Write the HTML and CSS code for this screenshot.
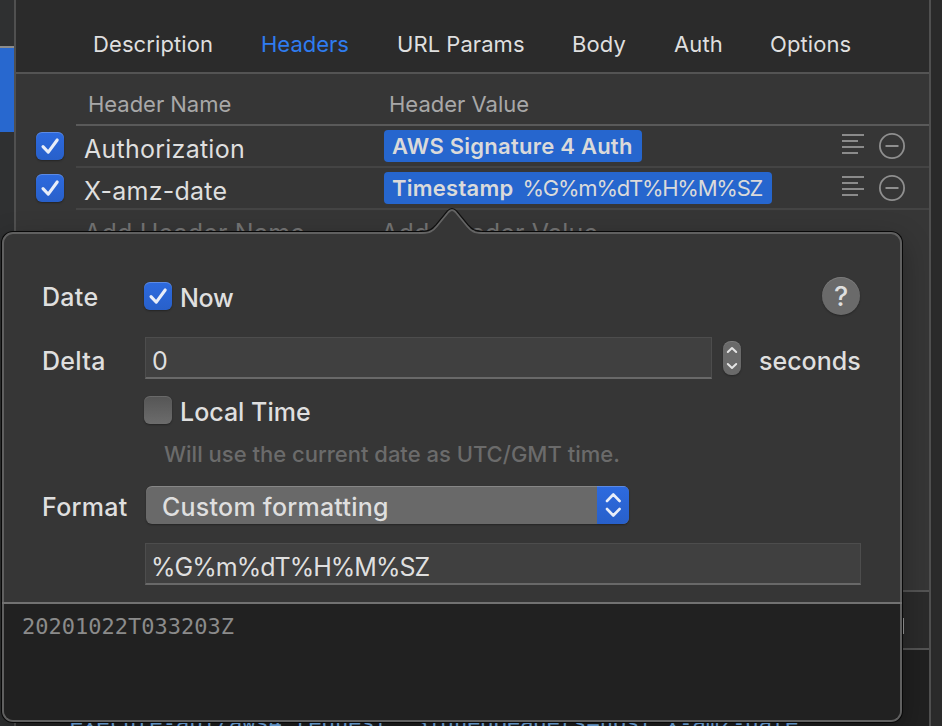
FILE: index.html
```html
<!DOCTYPE html>
<html lang="en">
<head>
<meta charset="utf-8">
<title>Request editor</title>
<link rel="stylesheet" href="styles.css">
</head>
<body>
<svg class="defs" width="0" height="0" aria-hidden="true">
  <symbol id="check" viewBox="0 0 28 28"><path d="M7 14.6 L12.3 20.2 L21.2 8" fill="none" stroke="#e8edf8" stroke-width="3.1" stroke-linecap="round" stroke-linejoin="round"/></symbol>
  <symbol id="lines" viewBox="0 0 22 20"><path d="M0 1H22M0 7H16M0 13H22M0 19H16" stroke="#8b8b8b" stroke-width="2"/></symbol>
  <symbol id="minus" viewBox="0 0 26 26"><circle cx="13" cy="13" r="12.1" fill="none" stroke="#8f8f8f" stroke-width="1.8"/><path d="M6.5 13H19.5" stroke="#8f8f8f" stroke-width="2"/></symbol>
</svg>
<div class="window">
  <aside class="sidebar"><div class="selected"></div></aside>
  <main class="editor">
    <nav class="tabs">
      <span class="tab t1">Description</span><span class="tab t2 active">Headers</span><span class="tab t3">URL Params</span><span class="tab t4">Body</span><span class="tab t5">Auth</span><span class="tab t6">Options</span>
    </nav>
    <section class="headers">
      <div class="thead"><span class="hname">Header Name</span><span class="hvalue">Header Value</span></div>
      <div class="row">
        <span class="checkbox on"><svg><use href="#check"/></svg></span>
        <div class="cells"><span class="name n1">Authorization</span><span class="token k1"><b>AWS Signature 4 Auth</b></span>
          <svg class="lines"><use href="#lines"/></svg><svg class="minus"><use href="#minus"/></svg></div>
      </div>
      <div class="row">
        <span class="checkbox on"><svg><use href="#check"/></svg></span>
        <div class="cells"><span class="name n2">X-amz-date</span><span class="token k2"><b>Timestamp</b><span class="fmt">%G%m%dT%H%M%SZ</span></span>
          <svg class="lines"><use href="#lines"/></svg><svg class="minus"><use href="#minus"/></svg></div>
      </div>
      <div class="row empty"><span class="add-name">Add Header Name</span><span class="add-value">Add Header Value</span></div>
    </section>
    <div class="response-bar"><i></i></div>
    <pre class="code">execute-api/aws4_request, SignedHeaders=host;x-amz-date</pre>
  </main>
  <aside class="inspector"></aside>
</div>

<div class="popover">
  <svg class="arrow" viewBox="0 0 66 29"><path class="fill" d="M0 28 L4 26.5 C11 26 14 24 18 19 L29.5 5 Q33 1.5 36.5 5 L48 19 C52 24 55 26 62 26.5 L66 28 V29 H0Z"/><path class="outer" d="M3 24.5 C10 24.3 13 22.5 17 18 L28.5 4 Q33 -0.8 37.5 4 L49 18 C53 22.5 56 24.3 63 24.5"/><path class="inner" d="M0 26 H2 C11 26 14 24 18 19 L29.5 5 Q33 1.4 36.5 5 L48 19 C52 24 55 26 64 26 H66"/></svg>
  <div class="form">
    <div class="line date"><label class="lab date-lab">Date</label><span class="checkbox on"><svg><use href="#check"/></svg></span><span class="opt now">Now</span><span class="help"><span>?</span></span></div>
    <div class="line delta"><label class="lab delta-lab">Delta</label><span class="field">0</span>
      <svg class="stepper" viewBox="0 0 18 34"><path d="M4.8 11 L9 7 L13.2 11M4.8 23 L9 27 L13.2 23" fill="none" stroke="#e4e4e4" stroke-width="2" stroke-linecap="round" stroke-linejoin="round"/></svg>
      <span class="opt sec">seconds</span></div>
    <div class="line local"><span class="checkbox"></span><span class="opt loc">Local Time</span></div>
    <div class="hint"><span>Will use the current date as UTC/GMT time.</span></div>
    <div class="line format"><label class="lab format-lab">Format</label><span class="select"><span class="custom">Custom formatting</span><svg viewBox="0 0 32 38"><path d="M10 15 L16.3 8.5 L22.6 15M10 23 L16.3 29.5 L22.6 23" fill="none" stroke="#e8edf8" stroke-width="2.6" stroke-linecap="round" stroke-linejoin="round"/></svg></span></div>
    <div class="field pattern"><span>%G%m%dT%H%M%SZ</span></div>
  </div>
  <div class="preview">20201022T033203Z</div>
</div>
</body>
</html>
```
FILE: styles.css
```css
* { box-sizing: border-box; }
body {
  margin: 0;
  width: 942px;
  height: 726px;
  overflow: hidden;
  position: relative;
  background: #292929;
  color: #dfdfdf;
  font-family: Inter, "Liberation Sans", sans-serif;
  font-size: 22px;
  white-space: nowrap;
}
.defs { position: absolute; }
svg { display: block; flex: none; }
.window { display: flex; height: 726px; overflow: hidden; }
.sidebar { width: 14px; flex: none; background: #2f3031; padding-top: 46px; }
.selected { height: 86px; border-top: 2px solid #8c8c8c; background: #2868cf; }
.editor {
  width: 917px;
  flex: none;
  display: flex;
  flex-direction: column;
  border: solid #505050;
  border-width: 0 2px;
  background: #363636;
}
.inspector { flex: 1; background: #2a2a2a; }

.tabs {
  height: 74px;
  flex: none;
  display: flex;
  padding: 30px 0 0 77px;
  border-bottom: 2px solid #545454;
  background: #2b2b2b;
  line-height: 28px;
}
.tab { flex: none; font-size: 22px; letter-spacing: .1px; }
.t1 { width: 168px; }
.t2 { width: 136px; letter-spacing: 0; }
.t3 { width: 175px; letter-spacing: .05px; }
.t4 { width: 102px; }
.t5 { width: 96px; }
.active { color: #2f7cf0; }

.headers { flex: none; height: 516px; }
.thead {
  display: flex;
  height: 52px;
  margin-left: 60px;
  padding: 16px 0 0 12px;
  border-bottom: 2px solid #5a5a5a;
  color: #a8a8a8;
  line-height: 28px;
}
.hname { width: 301px; letter-spacing: -.03px; }
.row { display: flex; height: 42px; padding-left: 20px; }
.checkbox {
  width: 28px;
  height: 28px;
  flex: none;
  border-radius: 6px;
  background: linear-gradient(#555, #6c6c6c);
  box-shadow: inset 0 1px rgba(255,255,255,.12), 0 1px 2px rgba(0,0,0,.35);
}
.checkbox.on { background: linear-gradient(#2d6adf, #2860ca); box-shadow: inset 0 1px rgba(255,255,255,.22), 0 1px 2px rgba(0,0,0,.35); }
.checkbox svg { width: 28px; height: 28px; }
.row .checkbox { margin: 6px 12px 0 0; }
.cells { flex: 1; display: flex; border-bottom: 2px solid #444; padding-left: 8px; }
.name { width: 300px; flex: none; font-size: 25px; line-height: 46px; letter-spacing: .25px; }
.token {
  display: flex;
  flex: none;
  height: 32px;
  margin-top: 4px;
  padding-left: 8px;
  border-radius: 4px;
  background: #2666ce;
  line-height: 32px;
  color: #dadada;
}
.token b { font-weight: 600; letter-spacing: .25px; }
.k1 { width: 258px; }
.k2 { width: 388px; }
.fmt { margin-left: 9px; letter-spacing: -1.25px; }
.lines { width: 22px; height: 20px; margin: 8px 15px 0 auto; }
.minus { width: 26px; height: 26px; margin: 7px 24px 0 0; }
.empty { padding: 6px 0 0 68px; color: #747474; font-size: 25px; line-height: 34px; letter-spacing: .2px; }
.add-name { width: 297px; }
.response-bar { height: 60px; flex: none; border: solid #545454; border-width: 2px 0; background: #2b2b2b; padding: 26px 25px; }
.response-bar i { display: block; width: 2px; height: 16px; margin-left: auto; background: #9a9a9a; }
.code {
  flex: 1;
  margin: 0;
  padding: 60px 0 0 10px;
  border-left: 44px solid #272727;
  background: #202020;
  color: #7ab8f8;
  font: 22px/26px "DejaVu Sans Mono", monospace;
}

.popover {
  position: absolute;
  left: 2px;
  top: 232px;
  width: 900px;
  height: 490px;
  border: 2px solid #606060;
  border-radius: 11px;
  background: #363636;
  box-shadow: 0 0 0 1px #080808, 0 10px 30px rgba(0,0,0,.32);
}
.arrow { position: absolute; left: 415px; top: -27px; width: 66px; height: 29px; }
.arrow path { fill: none; }
.arrow .fill { fill: #363636; }
.arrow .outer { stroke: #101010; stroke-width: 1.4; }
.arrow .inner { stroke: #646464; stroke-width: 1.8; }
.form { height: 370px; margin: 0 -2px; padding: 41px 40px 0; border-bottom: 2px solid #727272; }
.line { display: flex; align-items: center; }
.lab, .opt, .custom { font-size: 25px; font-weight: 500; line-height: 32px; }
.lab { width: 102px; flex: none; letter-spacing: .3px; }
.date { height: 42px; }
.date-lab { padding-top: 2px; }
.format-lab { padding-top: 3px; }
.delta-lab { padding-top: 5px; }
.opt { margin-left: 8px; }
.now { margin-top: 3px; letter-spacing: -.3px; }
.help {
  display: grid;
  place-items: center;
  width: 38px;
  height: 38px;
  margin: 0 2px 0 auto;
  border-radius: 50%;
  background: #6a6a6a;
  box-shadow: inset 0 1px rgba(255,255,255,.13), 0 1px 2px rgba(0,0,0,.3);
  font-size: 27px;
  font-weight: 500;
}
.delta { height: 42px; margin-top: 20px; }
.field {
  width: 567px;
  height: 42px;
  flex: none;
  margin-left: 1px;
  padding: 4px 6px 0;
  border: 1px solid #4d4d4d;
  border-bottom: 2px solid #696969;
  background: #404040;
  font-size: 25px;
  line-height: 39px;
}
.stepper { width: 18px; height: 34px; margin: 0 0 0 11px; border-radius: 8px; background: #6a6a6a; box-shadow: inset 0 1px rgba(255,255,255,.12), 0 1px 2px rgba(0,0,0,.3); }
.sec { margin-left: 18px; padding-top: 5px; }
.local { height: 32px; margin: 15px 0 0 102px; }
.loc { padding-top: 4px; }
.hint { height: 30px; margin: 13px 0 0 122px; color: #6b6b6b; font-size: 22px; font-weight: 500; line-height: 30px; }
.format { height: 38px; margin-top: 17px; }
.select {
  display: flex;
  justify-content: space-between;
  width: 483px;
  height: 38px;
  margin-left: 2px;
  overflow: hidden;
  border-radius: 6px;
  background: #696969;
  box-shadow: inset 0 1px rgba(255,255,255,.2), 0 1px 2px rgba(0,0,0,.35);
}
.custom { margin: 5px 0 0 16px; letter-spacing: .25px; }
.select svg { width: 32px; height: 38px; background: linear-gradient(#2d6adf, #2860ca); box-shadow: inset 0 1px rgba(255,255,255,.22); }
.pattern { width: 716px; margin: 19px 0 0 103px; padding-left: 5px; letter-spacing: -1px; }
.preview {
  height: 116px;
  padding: 10px 0 0 18px;
  border-radius: 0 0 9px 9px;
  background: #212121;
  color: #8b8b8b;
  font: 22px/26px "DejaVu Sans Mono", monospace;
}
```
